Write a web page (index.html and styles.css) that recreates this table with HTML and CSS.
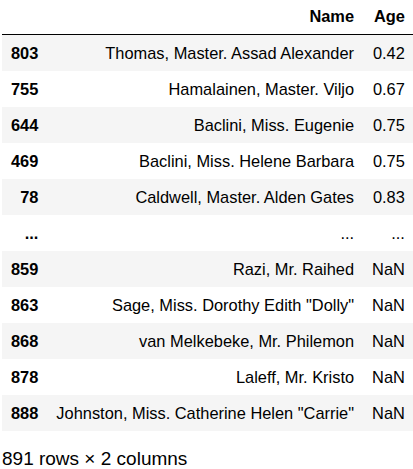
FILE: index.html
```html
<!DOCTYPE html>
<html>
<head>
<meta charset="utf-8">
<link rel="stylesheet" href="styles.css">
</head>
<body>
<div class="output">
  <table class="dataframe">
    <thead>
      <tr><th></th><th>Name</th><th>Age</th></tr>
    </thead>
    <tbody>
      <tr><th>803</th><td>Thomas, Master. Assad Alexander</td><td>0.42</td></tr>
      <tr><th>755</th><td>Hamalainen, Master. Viljo</td><td>0.67</td></tr>
      <tr><th>644</th><td>Baclini, Miss. Eugenie</td><td>0.75</td></tr>
      <tr><th>469</th><td>Baclini, Miss. Helene Barbara</td><td>0.75</td></tr>
      <tr><th>78</th><td>Caldwell, Master. Alden Gates</td><td>0.83</td></tr>
      <tr><th>...</th><td>...</td><td>...</td></tr>
      <tr><th>859</th><td>Razi, Mr. Raihed</td><td>NaN</td></tr>
      <tr><th>863</th><td>Sage, Miss. Dorothy Edith "Dolly"</td><td>NaN</td></tr>
      <tr><th>868</th><td>van Melkebeke, Mr. Philemon</td><td>NaN</td></tr>
      <tr><th>878</th><td>Laleff, Mr. Kristo</td><td>NaN</td></tr>
      <tr><th>888</th><td>Johnston, Miss. Catherine Helen "Carrie"</td><td>NaN</td></tr>
    </tbody>
  </table>
  <p class="shape">891 rows × 2 columns</p>
</div>
</body>
</html>
```
FILE: styles.css
```css
html, body {
  margin: 0;
  padding: 0;
  background: #ffffff;
}

.output {
  padding-left: 2px;
  font-family: "Liberation Sans", Arial, sans-serif;
  color: #000000;
}

.dataframe {
  border-collapse: collapse;
  border: none;
  border-spacing: 0;
  font-size: 16.4px;
  margin-top: -2px;
}

.dataframe thead {
  border-bottom: 1px solid #000000;
}

.dataframe th,
.dataframe td {
  text-align: right;
  vertical-align: middle;
  padding: 9px 9px;
  line-height: 18px;
  white-space: nowrap;
  border: none;
}

.dataframe th {
  font-weight: bold;
}

.dataframe tbody tr:nth-child(odd) {
  background: #f5f5f5;
}

.shape {
  margin: 17px 0 0 0;
  font-size: 19px;
  line-height: 22px;
}
```
